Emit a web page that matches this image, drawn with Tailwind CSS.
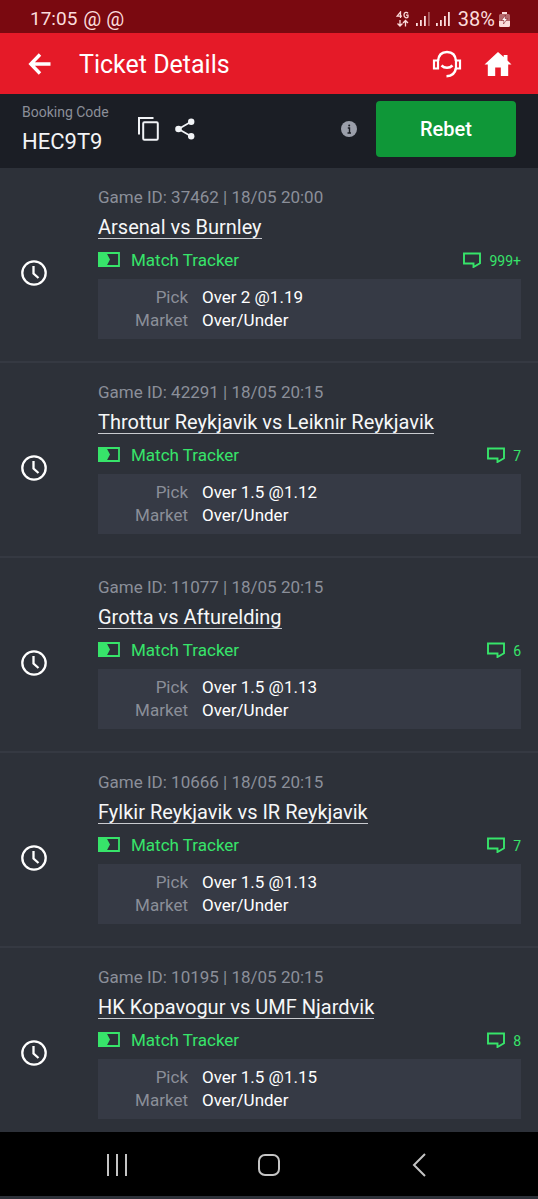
<!DOCTYPE html>
<html lang="en">
<head>
<meta charset="utf-8">
<meta name="viewport" content="width=device-width, initial-scale=1">
<title>Ticket Details</title>
<script src="https://cdn.jsdelivr.net/npm/@tailwindcss/browser@4"></script>
</head>
<body class="flex h-screen flex-col overflow-hidden bg-[#2d3139] font-['Roboto','Noto_Sans',sans-serif] text-white">

<!-- Status bar -->
<div class="flex h-[33px] shrink-0 items-center justify-between bg-[#7a0910] pt-1 pr-7 pl-[30px] text-[#fbdcdc]">
  <div class="flex items-center gap-1.5 text-[19px] leading-6"><span>17:05</span><span class="text-[20px]">@ @</span></div>
  <div class="flex items-center">
    <svg class="h-4 w-[13px]" viewBox="0 0 13 16" fill="none" stroke="currentColor" stroke-width="1.3"><path d="M4.500 7V1L1 5.200H6M12 2.300C11 .8 8 .8 8 4s3 3.300 4 2V4.200h-2M4 9v6M1.500 12.500 4 15l2.500-2.500M9.500 15.500V9.500M7 12l2.500-2.500L12 12"/></svg>
    <svg class="ml-[7px] h-4 w-[14px]" viewBox="0 0 14 16" fill="currentColor"><path d="M0 12h1.800v3H0zM4 9h1.800v6H4zM8 5h1.800v10H8z"/><path opacity=".4" d="M12 1h1.800v14H12z"/></svg>
    <svg class="ml-[6px] h-4 w-[14px]" viewBox="0 0 14 16" fill="currentColor"><path d="M0 12h1.800v3H0zM4 9h1.800v6H4zM8 5h1.800v10H8zM12 1h1.800v14H12z"/></svg>
    <span class="ml-2 text-[20px] leading-6">38%</span>
    <svg class="ml-1 h-4 w-[11px]" viewBox="0 0 11 16"><path fill="currentColor" opacity=".45" d="M3 1h5v2h1.500Q11 3 11 4.500V10H0V4.500Q0 3 1.500 3H3z"/><path fill="currentColor" d="M3 1h5v2H3zM0 10h11v4.500q0 1.500-1.500 1.500h-8Q0 16 0 14.500z"/><path d="M6.500 4 2.500 9.500h2.500L4.500 13l4-5.500H6z" fill="#fff" stroke="#7a0910" stroke-width=".5"/></svg>
  </div>
</div>

<!-- App header -->
<header class="flex h-[61px] shrink-0 items-center bg-[#e51a28] pr-[26px] pl-7">
  <button type="button" aria-label="Back" class="mr-7 block"><svg class="h-[22px] w-[23px]" viewBox="0 0 23 22" fill="none" stroke="#fff" stroke-width="3.400"><path d="M22.500 11H3M12 1.500 2.800 11l9.200 9.500"/></svg></button>
  <h1 class="grow pt-0.5 text-[25px] leading-8">Ticket Details</h1>
  <button type="button" aria-label="Customer support" class="block"><svg class="h-[28px] w-[30px]" viewBox="0 0 30 28" fill="none" stroke="#fff" stroke-width="2.200"><path d="M2 10.500h4v8H2zM24 10.500h4v8h-4z"/><path d="M6 11C6.500 5 10 2 15 2s8.500 3 9 9M24 18c-.8 5-4 8-9.500 8.300" stroke-width="2.500"/><path d="M9.500 15.500c3 3 8 3 11 0" stroke-width="2.500"/></svg></button>
  <button type="button" aria-label="Home" class="ml-[22px] block"><svg class="h-[26px] w-[28px]" viewBox="0 0 28 26" fill="#fff"><path d="M14 1 .500 13.500h3.300V25h7.400v-8.500h5.600V25h7.400V13.500h3.300L23.500 9.500V4h-3.800v2z"/></svg></button>
</header>

<!-- Booking bar -->
<section class="flex h-[74px] shrink-0 items-center bg-[#1b1e25] px-[22px] pb-1">
  <div>
    <div class="text-[14px] leading-5 text-[#8b8f99]">Booking Code</div>
    <div class="mt-1.5 text-[22px] leading-7 text-[#f3f4f6]">HEC9T9</div>
  </div>
  <button type="button" aria-label="Copy code" class="ml-[29px] block"><svg class="h-6 w-[21px]" viewBox="0 0 21 24" fill="none" stroke="#f1f3f6" stroke-width="2"><path d="M1 17.500V1h14.500"/><rect x="5.200" y="5.200" width="14.600" height="17.600" rx="1.200"/></svg></button>
  <button type="button" aria-label="Share" class="ml-4 block"><svg class="h-[22px] w-5" viewBox="0 0 20 22" fill="#f1f3f6"><path d="M16.500 3.500 3.500 11l13 7.500" fill="none" stroke="#f1f3f6" stroke-width="1.700"/><circle cx="16.200" cy="3.700" r="3.200"/><circle cx="3.500" cy="11" r="3.300"/><circle cx="16.200" cy="18.300" r="3.200"/></svg></button>
  <div class="grow"></div>
  <button type="button" aria-label="Information" class="mr-[19px] block"><svg class="size-4" viewBox="0 0 16 16"><circle cx="8" cy="8" r="8" fill="#9b9faa"/><path d="M6.800 7h1.700v5M6.500 12h3.500" stroke="#1b1e25" stroke-width="1.400" fill="none"/><circle cx="8.200" cy="4.500" r="1" fill="#1b1e25"/></svg></button>
  <button type="button" class="h-14 w-[140px] rounded-sm bg-[#0f9738] text-[20px] font-medium">Rebet</button>
</section>

<!-- Bets -->
<main id="bets" class="min-h-0 grow overflow-y-auto [scrollbar-width:none]"></main>

<template id="bet">
  <article class="flex items-center border-b-2 border-[#353942] pt-[17px] pr-[17px] pb-[22px] pl-5">
    <svg class="mt-[22px] mr-[50px] size-7 shrink-0" viewBox="0 0 28 28" fill="none" stroke="#fff" stroke-width="2.300"><circle cx="14" cy="14" r="11.700"/><path d="M13.500 7v7.500l5 4.500"/></svg>
    <div class="min-w-0 grow">
      <div data-f="id" class="text-[17px] leading-6 text-[#8b8f99]"></div>
      <div class="mt-2"><a href="#" data-f="name" class="block w-fit border-b border-[#c9cbd0] text-[20px] leading-[21px] text-[#f6f7f8]"></a></div>
      <div class="mt-[10px] flex h-6 items-center justify-between text-[#37e46a]">
        <a href="#" class="flex items-center gap-[11px] text-[17px]"><svg class="mb-[3px] h-[15px] w-[22px]" viewBox="0 0 22 15"><path d="M1 1h20v13H1z" fill="none" stroke="currentColor" stroke-width="1.800"/><path d="M0 0h8l4 7.500L8 15H0z" fill="currentColor"/></svg><span>Match Tracker</span></a>
        <a href="#" aria-label="Comments" class="flex items-center gap-2 text-[14px]"><svg class="mb-[3px] h-4 w-[18px]" viewBox="0 0 18 16" fill="none" stroke="currentColor" stroke-width="1.900"><path d="M1 1.500h16v9.800l-6.500 3.700v-3.500H1z"/></svg><span data-f="n"></span></a>
      </div>
      <dl class="mt-[6px] grid grid-cols-[90px_1fr] gap-x-[14px] bg-[#363a45] py-[7px] text-[17px] leading-[23px]">
        <dt class="text-right text-[#8b8f99]">Pick</dt><dd data-f="pick"></dd>
        <dt class="text-right text-[#8b8f99]">Market</dt><dd>Over/Under</dd>
      </dl>
    </div>
  </article>
</template>

<!-- System navigation -->
<nav class="grid h-16 shrink-0 grid-cols-[1fr_32px_1fr] items-center bg-black pt-0.5">
  <button type="button" aria-label="Recent apps" class="mr-[124px] justify-self-end"><svg class="h-6 w-6" viewBox="0 0 24 24" stroke="#c4c4c4" stroke-width="2"><path d="M3 1v22M12 1v22M21 1v22"/></svg></button>
  <button type="button" aria-label="Home screen" class="justify-self-center"><svg class="h-6 w-6" viewBox="0 0 24 24" fill="none" stroke="#c4c4c4" stroke-width="2"><rect x="2" y="2" width="20" height="20" rx="6"/></svg></button>
  <button type="button" aria-label="Go back" class="ml-[126px] justify-self-start"><svg class="h-6 w-4" viewBox="0 0 16 24" fill="none" stroke="#c4c4c4" stroke-width="2"><path d="M14 1 3 12l11 11"/></svg></button>
</nav>
<div class="h-[3px] shrink-0 bg-[#2d3139]"></div>

<script>
const bets = [
  ['37462', '20:00', 'Arsenal vs Burnley', '999+', 'Over 2 @1.19'],
  ['42291', '20:15', 'Throttur Reykjavik vs Leiknir Reykjavik', '7', 'Over 1.5 @1.12'],
  ['11077', '20:15', 'Grotta vs Afturelding', '6', 'Over 1.5 @1.13'],
  ['10666', '20:15', 'Fylkir Reykjavik vs IR Reykjavik', '7', 'Over 1.5 @1.13'],
  ['10195', '20:15', 'HK Kopavogur vs UMF Njardvik', '8', 'Over 1.5 @1.15'],
];
const tpl = document.getElementById('bet');
for (const [id, time, name, n, pick] of bets) {
  const row = tpl.content.cloneNode(true);
  const set = (f, t) => { row.querySelector(`[data-f="${f}"]`).textContent = t; };
  set('id', `Game ID: ${id} | 18/05 ${time}`);
  set('name', name);
  set('n', n);
  set('pick', pick);
  document.getElementById('bets').append(row);
}
</script>
</body>
</html>
